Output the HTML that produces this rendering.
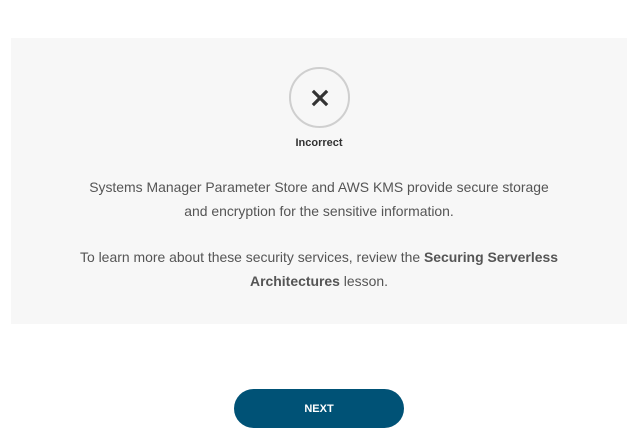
<!DOCTYPE html>
<html><head><style>
body{margin:0;width:644px;height:444px;background:#fff;font-family:"Liberation Sans",sans-serif;position:relative;overflow:hidden}
.panel{position:absolute;left:11px;top:38px;width:616px;height:286px;background:#f7f7f7}
.circ{position:absolute;left:289px;top:67px;width:57px;height:57px;border:2px solid #cfcfcf;border-radius:50%;box-sizing:content-box}
.lbl{position:absolute;left:0;width:638px;top:137px;text-align:center;font-size:11px;font-weight:bold;color:#333}
.t{position:absolute;left:0;width:638px;text-align:center;font-size:13.95px;color:#555;line-height:24px}
.btn{position:absolute;left:234px;top:389px;width:170px;height:39px;border-radius:20px;background:#005276;color:#fff;font-size:11px;font-weight:bold;text-align:center;line-height:41px}
</style></head><body>
<div class="panel"></div>
<div class="circ"><svg width="57" height="57" viewBox="0 0 57 57"><path d="M23 23L35 35M35 23L23 35" stroke="#333" stroke-width="3.2" stroke-linecap="square"/></svg></div>
<div class="lbl">Incorrect</div>
<div class="t" style="top:175px">Systems Manager Parameter Store and AWS KMS provide secure storage<br>and encryption for the sensitive information.</div>
<div class="t" style="top:245px">To learn more about these security services, review the <b>Securing Serverless</b><br><b>Architectures</b> lesson.</div>
<div class="btn">NEXT</div>
</body></html>
